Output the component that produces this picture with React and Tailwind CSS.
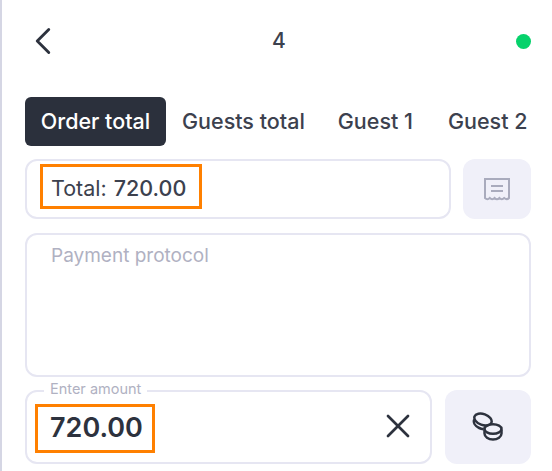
import { ChevronLeft, X } from "lucide-react";

const tabs = ["Guests total", "Guest 1", "Guest 2"];

function ReceiptIcon() {
  return (
    <svg width="28" height="24" viewBox="0 0 28 24" fill="none" stroke="#a9abbd" strokeWidth="2">
      <path d="M2 21V2h24v19c-1.500 1.600-3 1.600-4.800 0-1.600 1.600-3.200 1.600-4.800 0-1.600 1.600-3.200 1.600-4.800 0-1.600 1.600-3.200 1.600-4.800 0-1.600 1.600-3.200 1.600-4.800 0Z" />
      <path d="M8 9h12M8 14h12" />
    </svg>
  );
}

function CoinsIcon() {
  return (
    <svg width="32" height="30" viewBox="0 0 32 30" fill="none" stroke="#2d323e" strokeWidth="2.500">
      <ellipse cx="11" cy="7.500" rx="9" ry="5.500" transform="rotate(20 11 7.500)" />
      <path d="M2.200 7.500c-1.200 3 .8 6.500 5 8.500 1.500.7 3 1 4.500 1.200" />
      <ellipse cx="21" cy="17" rx="8.500" ry="4.800" />
      <path d="M12.500 17.500v4c0 3.200 3.800 6 8.500 6s8.500-2.800 8.500-6v-4" />
    </svg>
  );
}

export default function App() {
  return (
    <div className="h-[471px] w-[552px] overflow-hidden border-l-2 border-[#d5d6e4] bg-white pl-[23px] pr-[21px] font-['Inter',sans-serif] text-[#3c414e]">
      {/* Header */}
      <div className="flex h-[82px] items-center justify-between">
        <ChevronLeft size={46} strokeWidth={1.500} className="ml-[-5px] text-[#2d323e]" />
        <span className="ml-[-24px] text-[21px] font-medium">4</span>
        <span className="h-[15px] w-[15px] rounded-full bg-[#06d26b]" />
      </div>

      {/* Tabs */}
      <div className="mt-[15px] flex h-[49px] items-center text-[21.500px] font-medium whitespace-nowrap">
        <div className="flex h-full w-[141px] items-center justify-center rounded-md bg-[#2b303c] text-white">
          Order total
        </div>
        <span className="ml-[16px]">{tabs[0]}</span>
        <span className="ml-[33px]">{tabs[1]}</span>
        <span className="ml-[35px]">{tabs[2]}</span>
      </div>

      {/* Total */}
      <div className="mt-[13px] flex h-[60px] gap-3">
        <div className="flex flex-1 items-start rounded-xl border-2 border-[#e6e6f2] pl-[13px] pt-[3px]">
          <div className="flex h-[45px] w-[162px] items-center border-[3px] border-[#ff8000] pl-[8px] pt-[3px] text-[21.500px] font-medium">
            <span className="mr-[1px] font-normal">Total:&nbsp;</span>720.00
          </div>
        </div>
        <button className="flex w-[68px] items-center justify-center rounded-xl bg-[#f0f0f9]">
          <ReceiptIcon />
        </button>
      </div>

      {/* Protocol */}
      <div className="mt-[14px] h-[144px] rounded-xl border-2 border-[#e6e6f2] px-[24px] py-[7px] text-[19px] text-[#b0b1c2]">
        Payment protocol
      </div>

      {/* Amount */}
      <div className="mt-[13px] flex h-[74px] gap-[13px]">
        <div className="relative flex flex-1 items-start justify-between rounded-xl border-2 border-[#e6e6f2] pl-[8px] pr-[12px] pt-[12px]">
          <span className="absolute left-[17px] top-[-12px] bg-white px-[6px] text-[14.500px] leading-[18px] text-[#b0b1c2]">
            Enter amount
          </span>
          <div className="flex h-[49px] w-[120px] items-center border-[3px] border-[#ff8000] pl-[12px] text-[27px] font-semibold text-[#2d323e]">
            720.00
          </div>
          <X size={40} strokeWidth={1.600} className="mt-[2px] text-[#2d323e]" />
        </div>
        <button className="flex w-[86px] items-center justify-center rounded-xl bg-[#f0f0f9]">
          <CoinsIcon />
        </button>
      </div>
    </div>
  );
}
